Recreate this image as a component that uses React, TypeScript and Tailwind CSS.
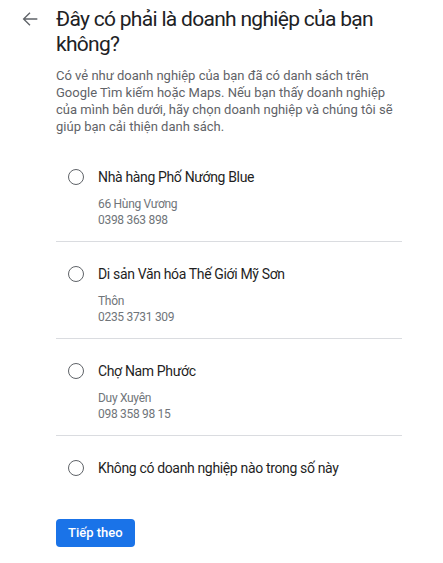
const businesses = [
  { name: "Nhà hàng Phố Nướng Blue", address: "66 Hùng Vương", phone: "0398 363 898" },
  { name: "Di sản Văn hóa Thế Giới Mỹ Sơn", address: "Thôn", phone: "0235 3731 309" },
  { name: "Chợ Nam Phước", address: "Duy Xuyên", phone: "098 358 98 15" },
];

const Radio = () => (
  <span className="mt-[2px] block h-4 w-4 shrink-0 rounded-full border-[1.5px] border-[#5f6368]" />
);

export default function App() {
  return (
    <div
      className="flex min-h-screen bg-white text-[#202124]"
      style={{ fontFamily: "Roboto, 'Noto Sans', Arial, sans-serif" }}
    >
      <div className="w-[37px] shrink-0 pt-[8px] pl-[19px]">
        <svg viewBox="0 0 24 24" className="h-[22px] w-[22px] fill-[#5f6368]">
          <path d="M20 11.25H6.9l5.6-5.6L11.44 4.6 4 12l7.44 7.4 1.06-1.05-5.6-5.6H20z" />
        </svg>
      </div>
      <div className="ml-[19px] w-[346px] pt-[7px]">
        <h1 className="text-[21px] leading-[25px] font-normal tracking-[-0.7px]">
          Đây có phải là doanh nghiệp của bạn không?
        </h1>
        <p className="mt-[10px] text-[13px] leading-[17px] text-[#5f6368]">
          Có vẻ như doanh nghiệp của bạn đã có danh sách trên Google Tìm kiếm hoặc Maps. Nếu bạn thấy doanh nghiệp của mình bên dưới, hãy chọn doanh nghiệp và chúng tôi sẽ giúp bạn cải thiện danh sách.
        </p>
        <div className="mt-[10px]">
          {businesses.map((b) => (
            <label
              key={b.name}
              className="flex cursor-pointer gap-[14px] border-b border-[#dadce0] pt-[22px] pb-[13px] pl-[12px]"
            >
              <Radio />
              <div>
                <div className="text-[14px] leading-[20px] tracking-[-0.35px] text-[#1f1f1f]">{b.name}</div>
                <div className="mt-[9px] text-[12px] leading-[16px] tracking-[-0.3px] text-[#70757a]">
                  <div>{b.address}</div>
                  <div>{b.phone}</div>
                </div>
              </div>
            </label>
          ))}
          <label className="flex cursor-pointer gap-[14px] pt-[22px] pl-[12px]">
            <Radio />
            <div className="text-[14px] leading-[20px] tracking-[-0.35px] text-[#1f1f1f]">
              Không có doanh nghiệp nào trong số này
            </div>
          </label>
        </div>
        <button className="mt-[41px] h-[28px] rounded-[4px] bg-[#1a73e8] px-[12px] text-[13px] font-medium text-white">
          Tiếp theo
        </button>
      </div>
    </div>
  );
}
